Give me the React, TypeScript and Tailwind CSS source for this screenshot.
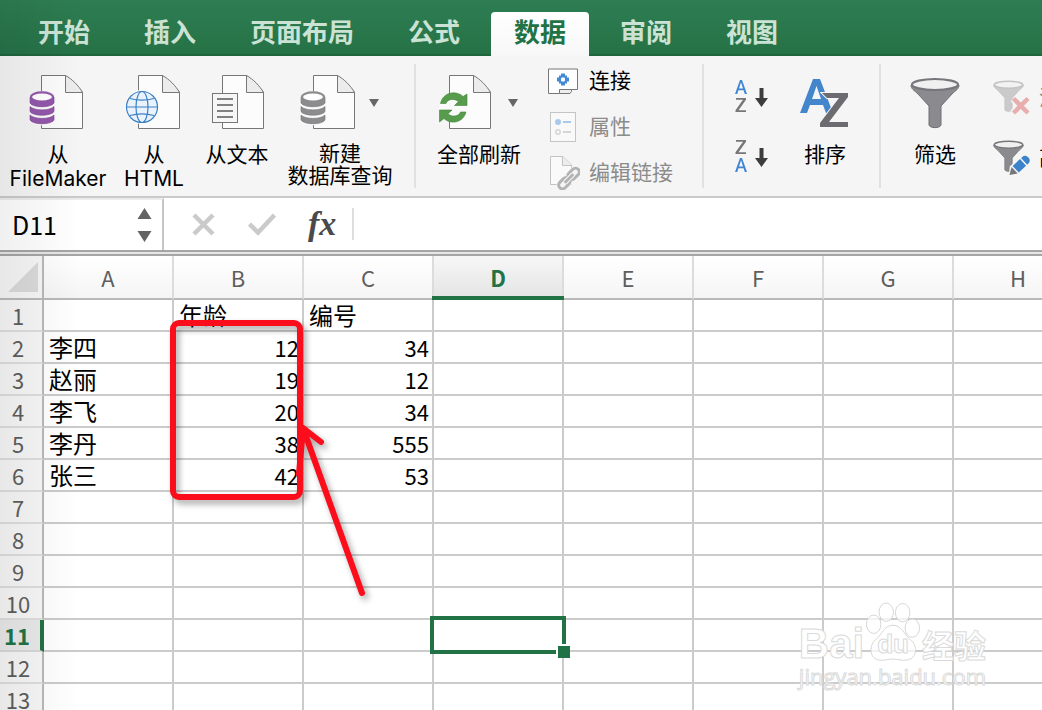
import React from "react";

const tabs = ["开始", "插入", "页面布局", "公式", "数据", "审阅", "视图"];
const columns = ["A", "B", "C", "D", "E", "F", "G", "H"];
const data: (string | number)[][] = [
  ["", "年龄", "编号"],
  ["李四", 12, 34],
  ["赵丽", 19, 12],
  ["李飞", 20, 34],
  ["李丹", 38, 555],
  ["张三", 42, 53],
];
const rows = Array.from({ length: 13 }, (_, i) => i + 1);

function Page({ x = 13 }: { x?: number }) {
  return (
    <g transform={`translate(${x} 1)`}>
      <path d="M0.5 0.5H24.5L41.5 17V53.5H0.5Z" fill="#fcfcfc" stroke="#77777a" strokeLinejoin="round" />
      <path d="M24.5 0.5V17.5H41.5C38 11 31 4 24.500 0.500Z" fill="#ececec" stroke="#77777a" strokeLinejoin="round" />
    </g>
  );
}

function Cylinders({ main, dark }: { main: string; dark: string }) {
  return (
    <g>
      <path d="M0 24C0 15 27 15 27 24V46C27 53 0 53 0 46Z" fill="#fafafa" />
      <path d="M1 41C5 45.500 21 45.500 25 41V46C22 51 4 51 1 46Z" fill={main} stroke={dark} strokeWidth="0.600" />
      <path d="M1 32.500C5 37 21 37 25 32.500V37.500C22 42.500 4 42.500 1 37.500Z" fill={main} stroke={dark} strokeWidth="0.600" />
      <path d="M1 23V29C4 34 22 34 25 29V23Z" fill={main} stroke={dark} strokeWidth="0.600" />
      <ellipse cx="13" cy="23" rx="11" ry="4.600" fill="#fff" stroke={main} strokeWidth="2.200" />
    </g>
  );
}

function FileMakerIcon() {
  return (
    <svg width="58" height="58" viewBox="0 0 58 58" aria-hidden="true">
      <Page x={12} />
      <Cylinders main="#9357ab" dark="#7a4291" />
    </svg>
  );
}

function DatabaseIcon() {
  return (
    <svg width="58" height="58" viewBox="0 0 58 58" aria-hidden="true">
      <Page x={13} />
      <Cylinders main="#8c8c8e" dark="#747476" />
    </svg>
  );
}

function HtmlIcon() {
  return (
    <svg width="58" height="58" viewBox="0 0 58 58" aria-hidden="true">
      <Page x={13} />
      <circle cx="17" cy="33" r="17" fill="#fafafa" />
      <g fill="none" stroke="#3d80c4" strokeWidth="1.2">
        <circle cx="17" cy="33" r="15.5" fill="#e9f3fd" />
        <ellipse cx="17" cy="33" rx="6" ry="15.5" />
        <path d="M1.500 33H32.500M5 24.500C12 26.500 22 26.500 29 24.500M5 41.500C12 39.500 22 39.500 29 41.500" />
      </g>
    </svg>
  );
}

function TextFileIcon() {
  return (
    <svg width="58" height="58" viewBox="0 0 58 58" aria-hidden="true">
      <Page x={14} />
      <rect x="4.500" y="19.500" width="25" height="29" fill="#f6f6f6" stroke="#77777a" />
      <path d="M9 25H25M9 31H25M9 37H25M9 43H25" stroke="#808083" strokeWidth="2" />
    </svg>
  );
}

function RefreshIcon() {
  return (
    <svg width="58" height="58" viewBox="0 0 58 58" aria-hidden="true">
      <g transform="translate(-1 0)">
        <Page x={11} />
      </g>
      <path d="M1 30C5 18 18 17 24 24L28 20V34H0Z" fill="#fafafa" />
      <path d="M0 34H28L27 38C24 49 12 51 5 44L0 48Z" fill="#fafafa" />
      <g fill="#569c4c" stroke="#43853b" strokeWidth="0.600">
        <path d="M1.500 29.500C4 18 17 16 24 22.500L28 20V31.500H15.500L19.500 27.500C15 24 8.500 25 7 29.500Z" />
        <path d="M27 38C24 49.500 11 50.500 5 44.500L0.500 48V36H13L9 39.800C13 43.500 20 42.500 21.500 38Z" />
      </g>
    </svg>
  );
}

function ConnectionIcon() {
  return (
    <svg width="32" height="30" viewBox="0 0 32 30" aria-hidden="true">
      <path d="M0.500 3V27.500H11.500L13 23.500H29.500V3Z" fill="#fff" stroke="#77777a" />
      <path d="M11.500 23.500H23.500V25.500L22 27.500H11.500Z" fill="#eee" stroke="#77777a" />
      <path d="M13 7.500H17V9.500H19V11.500H21V15.500H19V17.500H17V19.500H13V17.500H11V15.500H9V11.500H11V9.500H13Z" fill="#4389d6" />
      <rect x="13" y="11.500" width="4" height="4" rx="1" fill="#fff" />
    </svg>
  );
}

function PropertiesIcon() {
  return (
    <svg width="32" height="30" viewBox="0 0 32 30" aria-hidden="true">
      <rect x="2.500" y="0.500" width="25" height="29" fill="#f9f9f9" stroke="#c5c5c5" />
      <circle cx="10" cy="10" r="3" fill="#a9c9ec" />
      <circle cx="10" cy="20" r="2.200" fill="none" stroke="#d3d3d3" strokeWidth="1.400" />
      <path d="M15 10H23" stroke="#a9c9ec" strokeWidth="2" />
      <path d="M15 20H23" stroke="#d6d6d6" strokeWidth="2" />
    </svg>
  );
}

function EditLinkIcon() {
  return (
    <svg width="32" height="34" viewBox="0 0 32 34" aria-hidden="true">
      <path d="M2.500 0.500H15L23.500 9V28.500H2.500Z" fill="#fafafa" stroke="#c3c3c3" />
      <path d="M14.500 0.500V9.500H23.500" fill="#eee" stroke="#c3c3c3" />
      <g transform="translate(21 22.500) rotate(-45)" fill="none">
        <rect x="-15" y="-6" width="30" height="12" rx="6" fill="#f5f5f5" />
        <rect x="-13" y="-3.800" width="13" height="7.600" rx="3.800" stroke="#b3b3b3" strokeWidth="3" />
        <rect x="0" y="-3.800" width="13" height="7.600" rx="3.800" stroke="#b3b3b3" strokeWidth="3" />
        <path d="M-5 0H5" stroke="#f5f5f5" strokeWidth="5" />
        <path d="M-5 0H5" stroke="#b3b3b3" strokeWidth="2.800" strokeLinecap="round" />
      </g>
    </svg>
  );
}

const letterA = "M0 14L5 0H7L12 14H9.800L8.600 10.300H3.400L2.200 14ZM4 8.500H8L6 2.300Z";
const letterZ = "M1 0H11V1.800L3.500 12.200H11V14H0.500V12.200L8 1.800H1Z";

function SortOrderIcon({ descending = false }: { descending?: boolean }) {
  return (
    <svg width="34" height="34" viewBox="0 0 34 34" aria-hidden="true">
      <path d={descending ? letterZ : letterA} fill={descending ? "#77777a" : "#3f86d2"} />
      <path d={descending ? letterA : letterZ} fill={descending ? "#3f86d2" : "#77777a"} transform="translate(0 18)" />
      <path d="M24.500 8H28.500V18H33L26.500 27L20 18H24.500Z" fill="#3c3c3c" />
    </svg>
  );
}

function SortIcon() {
  return (
    <svg width="50" height="50" viewBox="0 0 50 50" aria-hidden="true">
      <path d="M0 35L13 1H20L33 35H26L23 27H10L7 35ZM12 21H21L16.500 8Z" fill="#4386cc" />
      <path d="M22 15H48V19L29 44H48V49H20V45L39 20H27Z" fill="#6c6c70" stroke="#f6f6f6" strokeWidth="2" paintOrder="stroke" />
    </svg>
  );
}

function Funnel() {
  return (
    <g>
      <path d="M1 8C1 12 4 13 8 17L19 29V48C20 51.500 30 51.500 31 48V29L42 17C46 13 49 12 49 8Z" fill="#8b8b8f" stroke="#707074" />
      <ellipse cx="25" cy="7.500" rx="23" ry="5.500" fill="#f0f0f0" stroke="#77777b" strokeWidth="2.200" />
    </g>
  );
}

function FilterIcon() {
  return (
    <svg width="50" height="52" viewBox="0 0 50 52" aria-hidden="true">
      <Funnel />
    </svg>
  );
}

function ClearFilterIcon() {
  return (
    <svg width="38" height="36" viewBox="0 0 38 36" aria-hidden="true">
      <g transform="scale(0.62)" opacity="0.4">
        <Funnel />
      </g>
      <path d="M20.500 18.500L35 33M35 18.500L20.500 33" stroke="#f5f5f5" strokeWidth="8" />
      <path d="M20.500 18.500L35 33M35 18.500L20.500 33" stroke="#e8aeae" strokeWidth="4.500" />
    </svg>
  );
}

function AdvancedFilterIcon() {
  return (
    <svg width="38" height="36" viewBox="0 0 38 36" aria-hidden="true">
      <g transform="scale(0.62)">
        <Funnel />
      </g>
      <g transform="translate(16.500 35) rotate(-43)">
        <path d="M-2 1L6 -6H22C29 -6 29 6 22 6H6Z" fill="#f6f6f6" />
        <path d="M0 0L7 -4.500V4.500Z" fill="#77777a" />
        <path d="M8.500 -4.500H18.500V4.500H8.500Z" fill="#3d83cc" />
        <path d="M20 -4.500H22C27 -4.500 27 4.500 22 4.500H20Z" fill="#3d83cc" />
      </g>
    </svg>
  );
}

function Caret() {
  return (
    <svg width="12" height="10" viewBox="0 0 12 10" aria-hidden="true">
      <path d="M1 1H11L6 9Z" fill="#666" />
    </svg>
  );
}

function BigButton({ icon, lines, className, tight = false }: { icon: React.ReactNode; lines: string[]; className: string; tight?: boolean }) {
  return (
    <button className={`flex shrink-0 flex-col items-center ${className}`}>
      <span className="flex h-[62px] items-center gap-[10px]">{icon}</span>
      <span className={`mt-[9px] flex flex-col whitespace-nowrap text-center text-[21px] ${tight ? "leading-[22px]" : "leading-6"}`}>
        {lines.map((line) => (
          <span key={line}>{line}</span>
        ))}
      </span>
    </button>
  );
}

function Divider() {
  return <div className="h-[124px] w-0.5 shrink-0 bg-[#e1e1e1]" />;
}

function Ribbon() {
  return (
    <section aria-label="数据" className="flex h-[142px] shrink-0 items-start overflow-hidden border-b-2 border-[#cacaca] bg-[#f5f5f5] pt-2 text-black">
      <div className="flex shrink-0 gap-[15px] pt-2 pr-[21px] pl-[10px]">
        <BigButton icon={<FileMakerIcon />} lines={["从", "FileMaker"]} className="w-24" />
        <BigButton icon={<HtmlIcon />} lines={["从", "HTML"]} className="w-[66px]" />
        <BigButton icon={<TextFileIcon />} lines={["从文本"]} className="w-[70px]" />
        <BigButton icon={<><DatabaseIcon /><Caret /></>} lines={["新建", "数据库查询"]} className="w-[106px]" tight />
      </div>
      <Divider />
      <div className="flex shrink-0 pt-2 pr-6 pl-[18px]">
        <BigButton icon={<><RefreshIcon /><Caret /></>} lines={["全部刷新"]} className="w-[90px]" />
      </div>
      <div className="flex w-[154px] shrink-0 flex-col text-[21px]">
        <button className="flex h-[46px] items-center gap-[9px] pb-3 whitespace-nowrap"><ConnectionIcon />连接</button>
        <button disabled className="flex h-[46px] items-center gap-[9px] pb-3 whitespace-nowrap text-[#8b8b8b]"><PropertiesIcon />属性</button>
        <button disabled className="flex h-[46px] items-center gap-[9px] pb-3 whitespace-nowrap text-[#8b8b8b]"><EditLinkIcon />编辑链接</button>
      </div>
      <Divider />
      <div className="flex shrink-0 gap-[30px] pt-2 pr-7 pl-[31px]">
        <div className="flex flex-col gap-[26px] pt-2">
          <button aria-label="升序"><SortOrderIcon /></button>
          <button aria-label="降序"><SortOrderIcon descending /></button>
        </div>
        <BigButton icon={<SortIcon />} lines={["排序"]} className="w-[52px]" />
      </div>
      <Divider />
      <div className="flex shrink-0 gap-8 pt-2 pl-7">
        <BigButton icon={<FilterIcon />} lines={["筛选"]} className="w-[52px]" />
        <div className="flex flex-col gap-6 pt-2 text-[21px] leading-9 whitespace-nowrap">
          <button disabled className="flex items-center gap-2 text-[#8b8b8b]"><ClearFilterIcon />清除</button>
          <button className="flex items-center gap-2"><AdvancedFilterIcon />高级</button>
        </div>
      </div>
    </section>
  );
}

function FormulaBar() {
  return (
    <section aria-label="编辑栏" className="flex h-[52px] shrink-0 bg-white">
      <div className="flex w-[164px] shrink-0 items-center justify-between border-t-2 border-r-2 border-t-[#ececec] border-r-[#c6c6c6] pr-[10px] pl-3">
        <input aria-label="名称框" defaultValue="D11" className="w-24 bg-transparent text-[25px] text-black outline-none" />
        <button aria-label="选择名称">
          <svg width="15" height="36" viewBox="0 0 15 36" aria-hidden="true">
            <path d="M0.500 12L7.500 1L14.500 12ZM0.500 24L7.500 35L14.500 24Z" fill="#636363" />
          </svg>
        </button>
      </div>
      <div className="flex grow items-center pl-7">
        <button aria-label="取消" className="w-[56px]">
          <svg width="23" height="23" viewBox="0 0 23 23" aria-hidden="true">
            <path d="M2 2L21 21M21 2L2 21" stroke="#cacaca" strokeWidth="4.500" />
          </svg>
        </button>
        <button aria-label="输入" className="w-[60px]">
          <svg width="28" height="23" viewBox="0 0 28 23" aria-hidden="true">
            <path d="M1.500 11L10 19.500L26.500 2" fill="none" stroke="#cacaca" strokeWidth="4.500" />
          </svg>
        </button>
        <button aria-label="插入函数" className="w-11 text-left font-['Liberation_Serif',serif] text-[34px] leading-9 font-bold text-[#4a4a4a] italic">fx</button>
        <div className="h-8 w-0.5 bg-[#dedede]" />
        <input aria-label="公式" className="min-w-0 grow self-stretch bg-transparent px-2 text-2xl outline-none" />
      </div>
    </section>
  );
}

function Annotation() {
  return (
    <svg width="200" height="290" viewBox="0 0 200 290" className="pointer-events-none absolute top-[60px] left-[166px] drop-shadow-[3px_4px_3px_rgba(0,0,0,0.35)]" aria-hidden="true">
      <g fill="none" stroke="#fb0d1b" strokeWidth="6" strokeLinecap="round" strokeLinejoin="round">
        <rect x="7" y="7" width="127" height="174" rx="6" />
        <path d="M196 277L137 112M133 158L137 112L155 126" />
      </g>
    </svg>
  );
}

function Watermark() {
  return (
    <div className="pointer-events-none absolute right-[56px] bottom-[20px] text-white [-webkit-text-stroke:1px_#dadada]">
      <div className="flex items-end justify-between font-bold">
        <span className="font-['Liberation_Sans',sans-serif] text-[42px] leading-9">Bai</span>
        <span className="relative flex h-[60px] w-[56px] items-end justify-center">
          <svg width="56" height="60" viewBox="0 0 58 62" className="absolute inset-0" aria-hidden="true">
            <g fill="white" fillOpacity="0.75" stroke="#d4d4d4">
              <ellipse cx="9" cy="23" rx="7.500" ry="9.500" />
              <ellipse cx="22" cy="10.500" rx="7.500" ry="9.500" />
              <ellipse cx="39" cy="11" rx="7.500" ry="9.500" />
              <ellipse cx="49" cy="27" rx="7.500" ry="9.500" />
              <path d="M29 24C20 24 18 33 12 38C4 44 4 58 14 60C20 61 24 59 29 59C34 59 38 61 44 60C54 58 55 45 47 39C40 33 38 24 29 24Z" />
            </g>
          </svg>
          <span className="relative pb-1 font-['Liberation_Sans',sans-serif] text-[26px] leading-7">du</span>
        </span>
        <span className="text-[32px] leading-9">经验</span>
      </div>
      <div className="font-['Open_Sans',sans-serif] text-[22px] leading-7">jingyan.baidu.com</div>
    </div>
  );
}

function Sheet() {
  return (
    <main className="relative grow overflow-hidden bg-white">
      <table className="w-[1084px] table-fixed border-separate border-spacing-0 text-[22px] leading-[30px]">
        <colgroup>
          <col className="w-11" />
          {columns.map((c) => (
            <col key={c} className="w-[130px]" />
          ))}
        </colgroup>
        <thead>
          <tr className="h-11">
            <th aria-label="全选" className="border-r-2 border-b-2 border-[#b9b9b9] bg-[#f6f6f6] p-0">
              <svg width="30" height="30" viewBox="0 0 30 30" className="ml-2" aria-hidden="true">
                <path d="M0 30L30 0V30Z" fill="#dadada" />
              </svg>
            </th>
            {columns.map((c) => (
              <th
                key={c}
                scope="col"
                className={
                  c === "D"
                    ? "relative border-r-2 border-b-2 border-r-[#dcdcdc] border-b-[#217346] bg-linear-to-b from-[#f7f7f7] to-[#e4e4e4] p-0 font-bold text-[#217346]"
                    : "border-r-2 border-b-2 border-r-[#dcdcdc] border-b-[#b9b9b9] bg-linear-to-b from-white to-[#f5f5f5] p-0 font-normal text-[#5e5e5e]"
                }
              >
                {c}
                {c === "D" && <span className="absolute -right-0.5 -bottom-0.5 -left-0.5 z-10 h-1 bg-[#217346]" />}
              </th>
            ))}
          </tr>
        </thead>
        <tbody>
          {rows.map((r) => (
            <tr key={r} className="h-8">
              <th
                scope="row"
                className={
                  r === 11
                    ? "border-r-4 border-b-2 border-r-[#217346] border-b-[#d8d8d8] bg-[#e9e9e9] p-0 pr-1.5 font-bold text-[#217346]"
                    : "border-r-2 border-b-2 border-r-[#b9b9b9] border-b-[#dedede] bg-[#f7f7f7] p-0 pr-1.5 font-normal text-[#5e5e5e]"
                }
              >
                {r}
              </th>
              {columns.map((c, i) => {
                const value = data[r - 1]?.[i] ?? "";
                return (
                  <td
                    key={c}
                    className={`relative border-r-2 border-b-2 border-[#cbcbcb] p-0 text-black ${typeof value === "number" ? "pr-[3px] text-right" : "pl-[5px] text-2xl leading-[30px]"}`}
                  >
                    {value}
                    {c === "D" && r === 11 && (
                      <span className="absolute -inset-x-1 -inset-y-1 z-10 border-4 border-[#217346]">
                        <span className="absolute -right-2 -bottom-2 size-3.5 border-t-2 border-l-2 border-white bg-[#217346]" />
                      </span>
                    )}
                  </td>
                );
              })}
            </tr>
          ))}
        </tbody>
      </table>
      <Annotation />
      <Watermark />
    </main>
  );
}

export default function App() {
  return (
    <div className="relative flex h-screen flex-col overflow-hidden bg-white font-['Inter','Noto_Sans_CJK_SC',sans-serif]">
      <nav className="flex h-14 shrink-0 items-end gap-2 border-b-2 border-[#1f653e] bg-linear-to-b from-[#2e7d52] to-[#267247] pl-[15px] text-[26px] font-bold">
        {tabs.map((t) => (
          <button
            key={t}
            className={
              t === "数据"
                ? "-mb-0.5 h-11 rounded-t bg-linear-to-b from-white to-[#f7f7f7] px-[23px] pb-0.5 leading-10 whitespace-nowrap text-[#217346]"
                : "h-[42px] px-[23px] leading-10 whitespace-nowrap text-[#cbe3d5]"
            }
          >
            {t}
          </button>
        ))}
      </nav>
      <Ribbon />
      <div className="flex min-h-0 grow flex-col font-['Noto_Sans_CJK_SC',sans-serif]">
        <FormulaBar />
        <div className="h-1.5 shrink-0 border-t-2 border-b-2 border-t-[#a5a5a5] border-b-[#a5a5a5] bg-[#e6e6e6]" />
        <Sheet />
      </div>
      <div className="pointer-events-none absolute inset-y-0 left-0 w-20 bg-linear-to-r from-black/6 to-transparent" />
    </div>
  );
}
